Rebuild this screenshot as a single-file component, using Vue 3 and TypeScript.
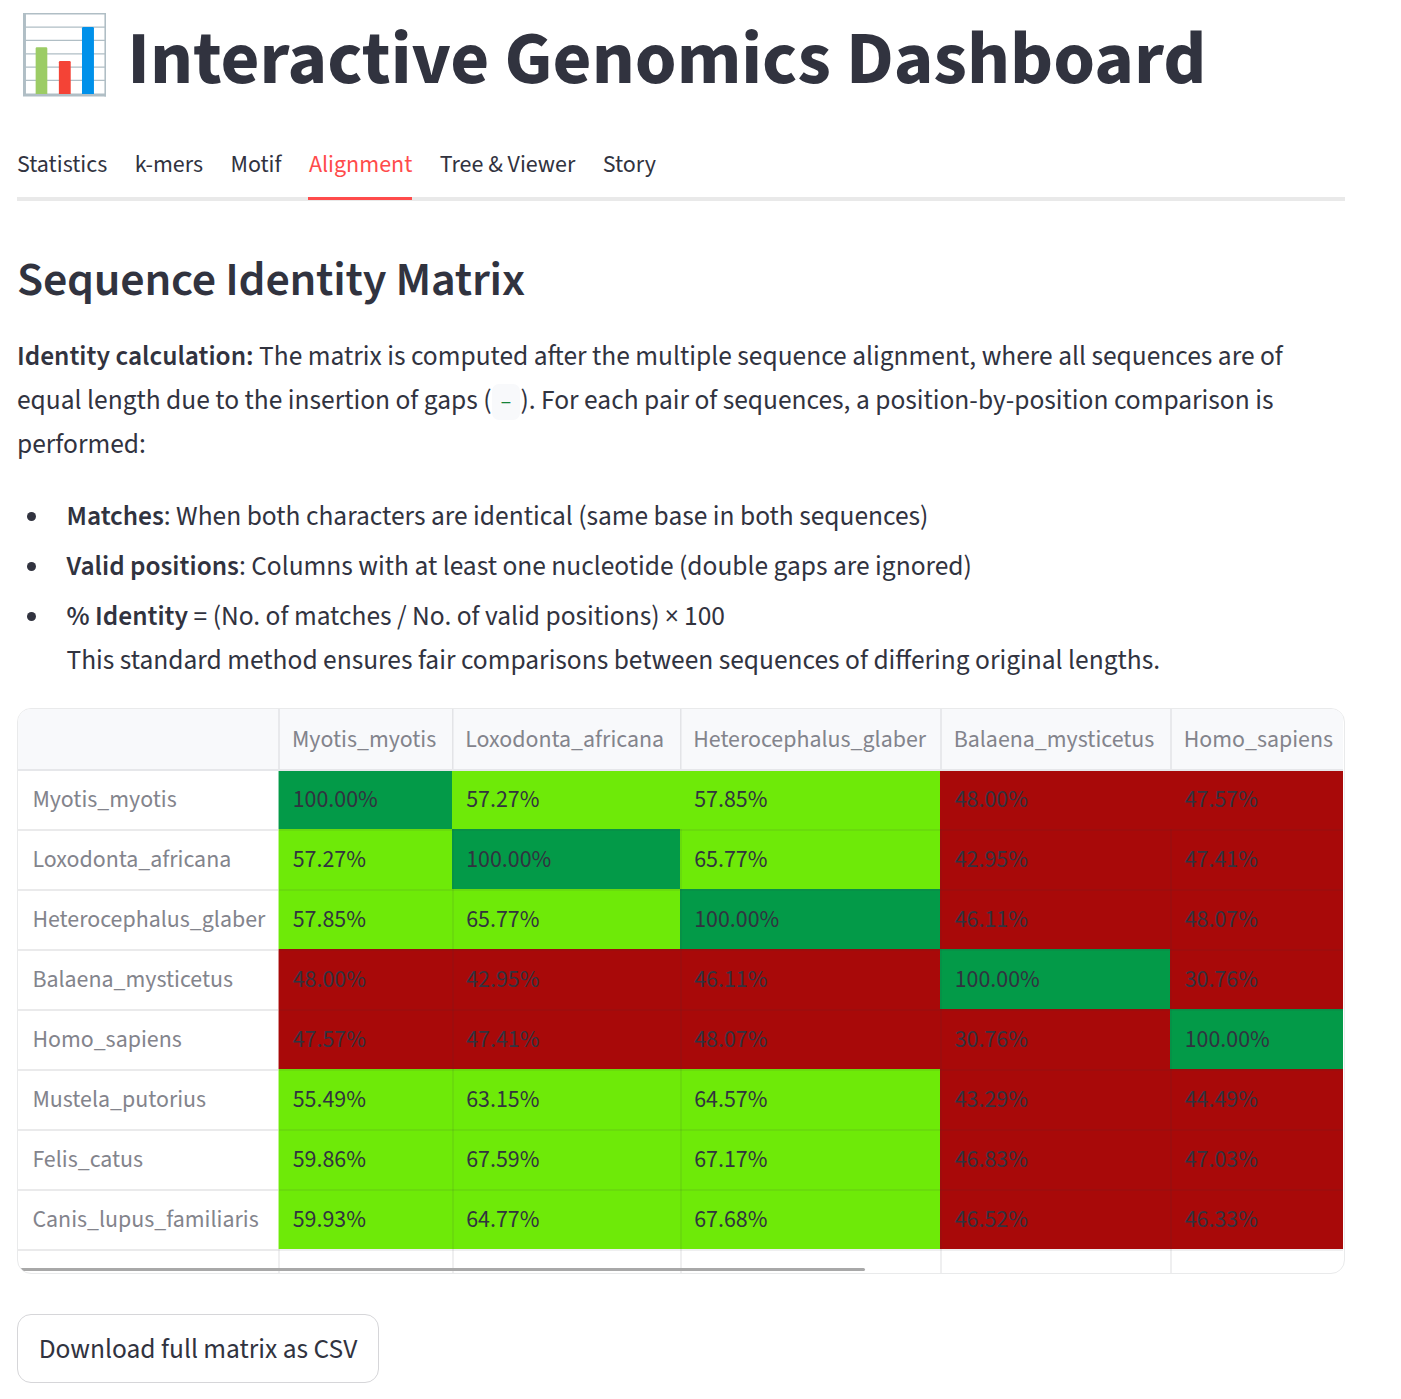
<script setup lang="ts">
const tabs = ['Statistics', 'k-mers', 'Motif', 'Alignment', 'Tree & Viewer', 'Story']
const activeTab = 'Alignment'

const columns = ['Myotis_myotis', 'Loxodonta_africana', 'Heterocephalus_glaber', 'Balaena_mysticetus', 'Homo_sapiens']

const rows: { name: string; values: number[] }[] = [
  { name: 'Myotis_myotis', values: [100, 57.27, 57.85, 48.0, 47.57] },
  { name: 'Loxodonta_africana', values: [57.27, 100, 65.77, 42.95, 47.41] },
  { name: 'Heterocephalus_glaber', values: [57.85, 65.77, 100, 46.11, 48.07] },
  { name: 'Balaena_mysticetus', values: [48.0, 42.95, 46.11, 100, 30.76] },
  { name: 'Homo_sapiens', values: [47.57, 47.41, 48.07, 30.76, 100] },
  { name: 'Mustela_putorius', values: [55.49, 63.15, 64.57, 43.29, 44.49] },
  { name: 'Felis_catus', values: [59.86, 67.59, 67.17, 46.83, 47.03] },
  { name: 'Canis_lupus_familiaris', values: [59.93, 64.77, 67.68, 46.52, 46.33] },
]

function level(value: number): string {
  if (value >= 90) return 'high'
  return value >= 50 ? 'mid' : 'low'
}
</script>

<template>
  <main class="page">
    <h1 class="title">
      <svg class="chart" viewBox="0 0 84 84" preserveAspectRatio="none" aria-hidden="true">
        <rect x="0.5" y="0.5" width="83" height="83" fill="#fff" />
        <path d="M0 14.2H84M0 27.6H84M0 41H84M0 54.4H84M0 67.8H84" stroke="#b0bec5" stroke-width="1.3" />
        <path d="M0 0.8H84M83.2 0V84" stroke="#b0bec5" stroke-width="1.6" />
        <path d="M1.5 0V84M0 82.3H84" stroke="#b0bec5" stroke-width="3" />
        <path d="M12.8 81.4V35.6q0-1.2 1.2-1.2h9.4q1.2 0 1.2 1.2V81.4z" fill="#9ccc65" />
        <path d="M36.3 81.4V49.4q0-1.2 1.2-1.2h9.6q1.2 0 1.2 1.2V81.4z" fill="#f44336" />
        <path d="M59.7 81.4V15.2q0-1.2 1.2-1.2h9.7q1.2 0 1.2 1.2V81.4z" fill="#0091ea" />
      </svg>
      <span>Interactive Genomics Dashboard</span>
    </h1>

    <nav class="tabs">
      <button v-for="tab in tabs" :key="tab" class="tab" :class="{ active: tab === activeTab }">{{ tab }}</button>
    </nav>

    <h2 class="heading">Sequence Identity Matrix</h2>

    <p class="text">
      <strong>Identity calculation:</strong> The matrix is computed after the multiple sequence alignment, where all
      sequences are of equal length due to the insertion of gaps (<code>-</code>). For each pair of sequences, a
      position-by-position comparison is performed:
    </p>

    <ul class="list">
      <li><strong>Matches</strong>: When both characters are identical (same base in both sequences)</li>
      <li><strong>Valid positions</strong>: Columns with at least one nucleotide (double gaps are ignored)</li>
      <li>
        <strong>% Identity</strong> = (No. of matches / No. of valid positions) × 100<br />This standard method ensures
        fair comparisons between sequences of differing original lengths.
      </li>
    </ul>

    <div class="frame">
      <div class="grid">
        <div class="head first"></div>
        <div v-for="(column, i) in columns" :key="column" class="head" :class="'col-' + i">{{ column }}</div>
        <template v-for="row in rows" :key="row.name">
          <div class="name">{{ row.name }}</div>
          <div v-for="(value, i) in row.values" :key="i" class="cell" :class="[level(value), 'col-' + i]">{{ value.toFixed(2) }}%</div>
        </template>
        <div class="name"></div>
        <div v-for="column in columns" :key="'next-' + column" class="cell"></div>
      </div>
      <div class="scrollbar"></div>
    </div>

    <button class="download">Download full matrix as CSV</button>
  </main>
</template>

<style>
body {
  margin: 0;
  background: #fff;
}
</style>

<style scoped>
.page {
  box-sizing: border-box;
  width: 1401px;
  height: 1399px;
  padding: 13px 56px 0 17px;
  overflow: hidden;
  color: #31333f;
  font-family: 'Source Sans 3', 'Source Sans Pro', 'Noto Sans CJK SC', sans-serif;
  font-size: 27.43px;
  line-height: 44px;
}
.title {
  display: flex;
  height: 84px;
  margin: 0;
  padding-left: 6px;
  font-size: 75.43px;
  font-weight: 700;
  line-height: 93px;
  white-space: nowrap;
}
.chart {
  flex: none;
  width: 83px;
  height: 83.6px;
  margin-right: 21.2px;
}
.tabs {
  display: flex;
  gap: 27.43px;
  height: 69px;
  margin-top: 35px;
  background: linear-gradient(#e9e9e9, #e9e9e9) bottom / 100% 4px no-repeat;
}
.tab {
  box-sizing: border-box;
  height: 68px;
  padding: 0;
  border: 0;
  border-bottom: 3px solid transparent;
  background: none;
  color: inherit;
  font: 400 24px/65px 'Source Sans 3', 'Source Sans Pro', 'Noto Sans CJK SC', sans-serif;
}
.tab.active {
  margin: 0 0 0 -0.6px;
  border-bottom-color: #ff4b4b;
  color: #ff4b4b;
  text-indent: 0.6px;
}
.heading {
  margin: 50px 0 0;
  font-size: 48px;
  font-weight: 600;
  line-height: 58px;
  letter-spacing: -0.24px;
}
.text {
  margin: 26px 0 0;
}
strong {
  font-weight: 600;
}
code {
  padding: 5px 8.3px 5px;
  border-radius: 7px;
  background: #f8f9fb;
  color: #158237;
  font: 20.57px/1 'Source Code Pro', 'DejaVu Sans Mono', monospace;
}
.list {
  margin: 28px 0 0;
  padding: 0;
  list-style: none;
}
.list li {
  position: relative;
  margin-bottom: 6px;
  padding-left: 49.5px;
}
.list li::before {
  content: '';
  position: absolute;
  top: 17px;
  left: 9.5px;
  width: 9.4px;
  height: 9.4px;
  border-radius: 50%;
  background: #31333f;
}
.frame {
  position: relative;
  box-sizing: border-box;
  width: 1328px;
  height: 566px;
  margin-top: 25px;
  border: 1px solid #e9eaeb;
  border-radius: 14px;
  overflow: hidden;
}
.grid {
  display: grid;
  grid-template-columns: 260px 174px 228px 260px 230px 173px;
  grid-template-rows: 60px repeat(9, 60px);
  font-size: 23.9px;
  line-height: 62px;
  white-space: nowrap;
}
.head,
.name,
.cell {
  box-sizing: border-box;
  padding-left: 14.2px;
}
.head {
  padding-left: 13.2px;
  background: #f8f9fb;
  color: #83848c;
}
.head.col-0 {
  padding-left: 14px;
}
.head.col-3,
.head.col-4 {
  padding-left: 13.7px;
}
.cell.col-0,
.cell.col-3,
.cell.col-4 {
  padding-left: 14.7px;
}
.name {
  padding-left: 14.4px;
  box-shadow: inset 0 2px rgba(49, 51, 63, 0.1);
  color: #83848c;
}
.head:not(.first) {
  box-shadow: inset 2px 0 rgba(49, 51, 63, 0.08);
}
.head.col-1,
.head.col-2 {
  box-shadow: inset 1.5px 0 rgba(49, 51, 63, 0.1);
}
.cell {
  box-shadow:
    inset 2px 0 rgba(49, 51, 63, 0.08),
    inset 0 2px rgba(49, 51, 63, 0.08);
}
.cell.col-0 {
  box-shadow:
    inset 1px 0 rgba(255, 255, 255, 0.55),
    inset 0 2px rgba(49, 51, 63, 0.08);
}
/* The header rule stays light above the coloured cells of the first row. */
.head + .name,
.head + .name ~ .cell:nth-child(-n + 12) {
  box-shadow: inset 0 2px #e6e7ea;
}
.head + .name + .cell.col-0 {
  box-shadow:
    inset 0 2px #e6e7ea,
    inset 1px 0 rgba(255, 255, 255, 0.55);
}
.high {
  background: #039a48;
}
.mid {
  background: #6eea08;
}
.low {
  background: #a80909;
}
.scrollbar {
  position: absolute;
  left: 0;
  bottom: 2px;
  width: 847px;
  height: 3px;
  border-radius: 0 2px 2px 0;
  background: #a8a8a8;
}
.download {
  display: block;
  box-sizing: border-box;
  width: 362px;
  height: 69px;
  margin-top: 40px;
  padding: 2px 0 0;
  border: 1px solid #d6d6d9;
  border-radius: 14px;
  background: #fff;
  color: inherit;
  font: 400 27.43px/65px 'Source Sans 3', 'Source Sans Pro', 'Noto Sans CJK SC', sans-serif;
}
</style>
